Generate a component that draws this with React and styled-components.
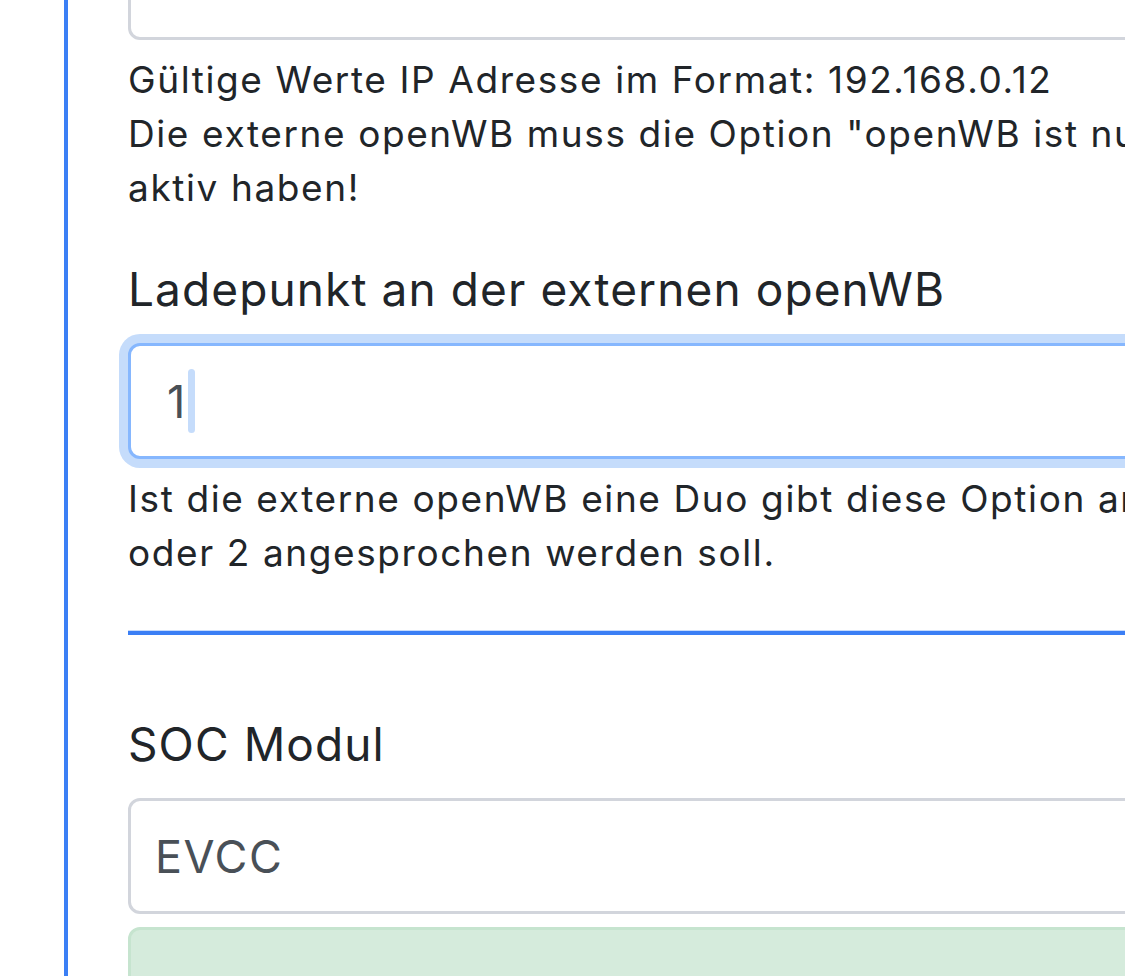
import React from "react";
import styled, { createGlobalStyle } from "styled-components";

const GlobalStyle = createGlobalStyle`
  html, body {
    margin: 0;
    padding: 0;
    background: #ffffff;
    overflow: hidden;
  }
  body {
    font-family: Inter, "Noto Sans", "Liberation Sans", sans-serif;
    color: #212529;
  }
`;

const Page = styled.div`
  padding-left: 64px;
  height: 976px;
  overflow: hidden;
`;

const Card = styled.div`
  display: flex;
  flex-direction: column;
  border-left: 4px solid #3b7ff5;
  height: 100%;
  padding-left: 60px;
`;

const Content = styled.div`
  width: 1500px;
  margin-top: -76px;
  display: flex;
  flex-direction: column;
`;

const Label = styled.label`
  display: block;
  font-size: 46px;
  line-height: 67px;
  letter-spacing: 1.1px;
  margin-top: ${(p) => p.$gap || 0}px;
  margin-bottom: 20px;
  color: #212529;
`;

const Field = styled.div`
  box-sizing: border-box;
  flex-shrink: 0;
  height: 116px;
  display: flex;
  align-items: center;
  padding: 0 36px;
  border: 3px solid ${(p) => (p.$focused ? "#86b7fe" : "#d2d5dc")};
  border-radius: 12px;
  background: #ffffff;
  font-size: 45px;
  letter-spacing: 1.5px;
  color: #495057;
  box-shadow: ${(p) => (p.$focused ? "0 0 0 9px #c5dcfb" : "none")};
  margin-top: ${(p) => p.$gap || 0}px;
  ${(p) => p.$select && "padding-left: 24px;"}
`;

const Caret = styled.span`
  display: inline-block;
  width: 7px;
  height: 64px;
  margin-left: 1px;
  border-radius: 4px;
  background: #c5dcfb;
`;

const HelpText = styled.div`
  margin-top: 13px;
  font-size: 37px;
  line-height: 54px;
  letter-spacing: 1.6px;
  color: #212529;
`;

const Rule = styled.hr`
  margin: 51px 0 0;
  border: 0;
  border-top: 4px solid #3b7ff5;
  box-shadow: 0 -1px 0 #c7dbfc;
`;

const Alert = styled.div`
  flex-shrink: 0;
  margin-top: 13px;
  height: 120px;
  border: 3px solid #c6e4cf;
  border-radius: 12px;
  background: #d5ebdc;
`;

export default function App() {
  return (
    <>
      <GlobalStyle />
      <Page>
        <Card>
          <Content>
            <Field>192.168.0.15</Field>
            <HelpText>
              Gültige Werte IP Adresse im Format: 192.168.0.12
              <br />
              Die externe openWB muss die Option "openWB ist nur ein Ladepunkt"
              <br />
              aktiv haben!
            </HelpText>

            <Label $gap={41}>Ladepunkt an der externen openWB</Label>
            <Field $focused>
              1
              <Caret />
            </Field>
            <HelpText>
              Ist die externe openWB eine Duo gibt diese Option an ob Ladepunkt 1
              <br />
              oder 2 angesprochen werden soll.
            </HelpText>

            <Rule />

            <Label $gap={76}>SOC Modul</Label>
            <Field $select>EVCC</Field>
            <Alert />
          </Content>
        </Card>
      </Page>
    </>
  );
}
